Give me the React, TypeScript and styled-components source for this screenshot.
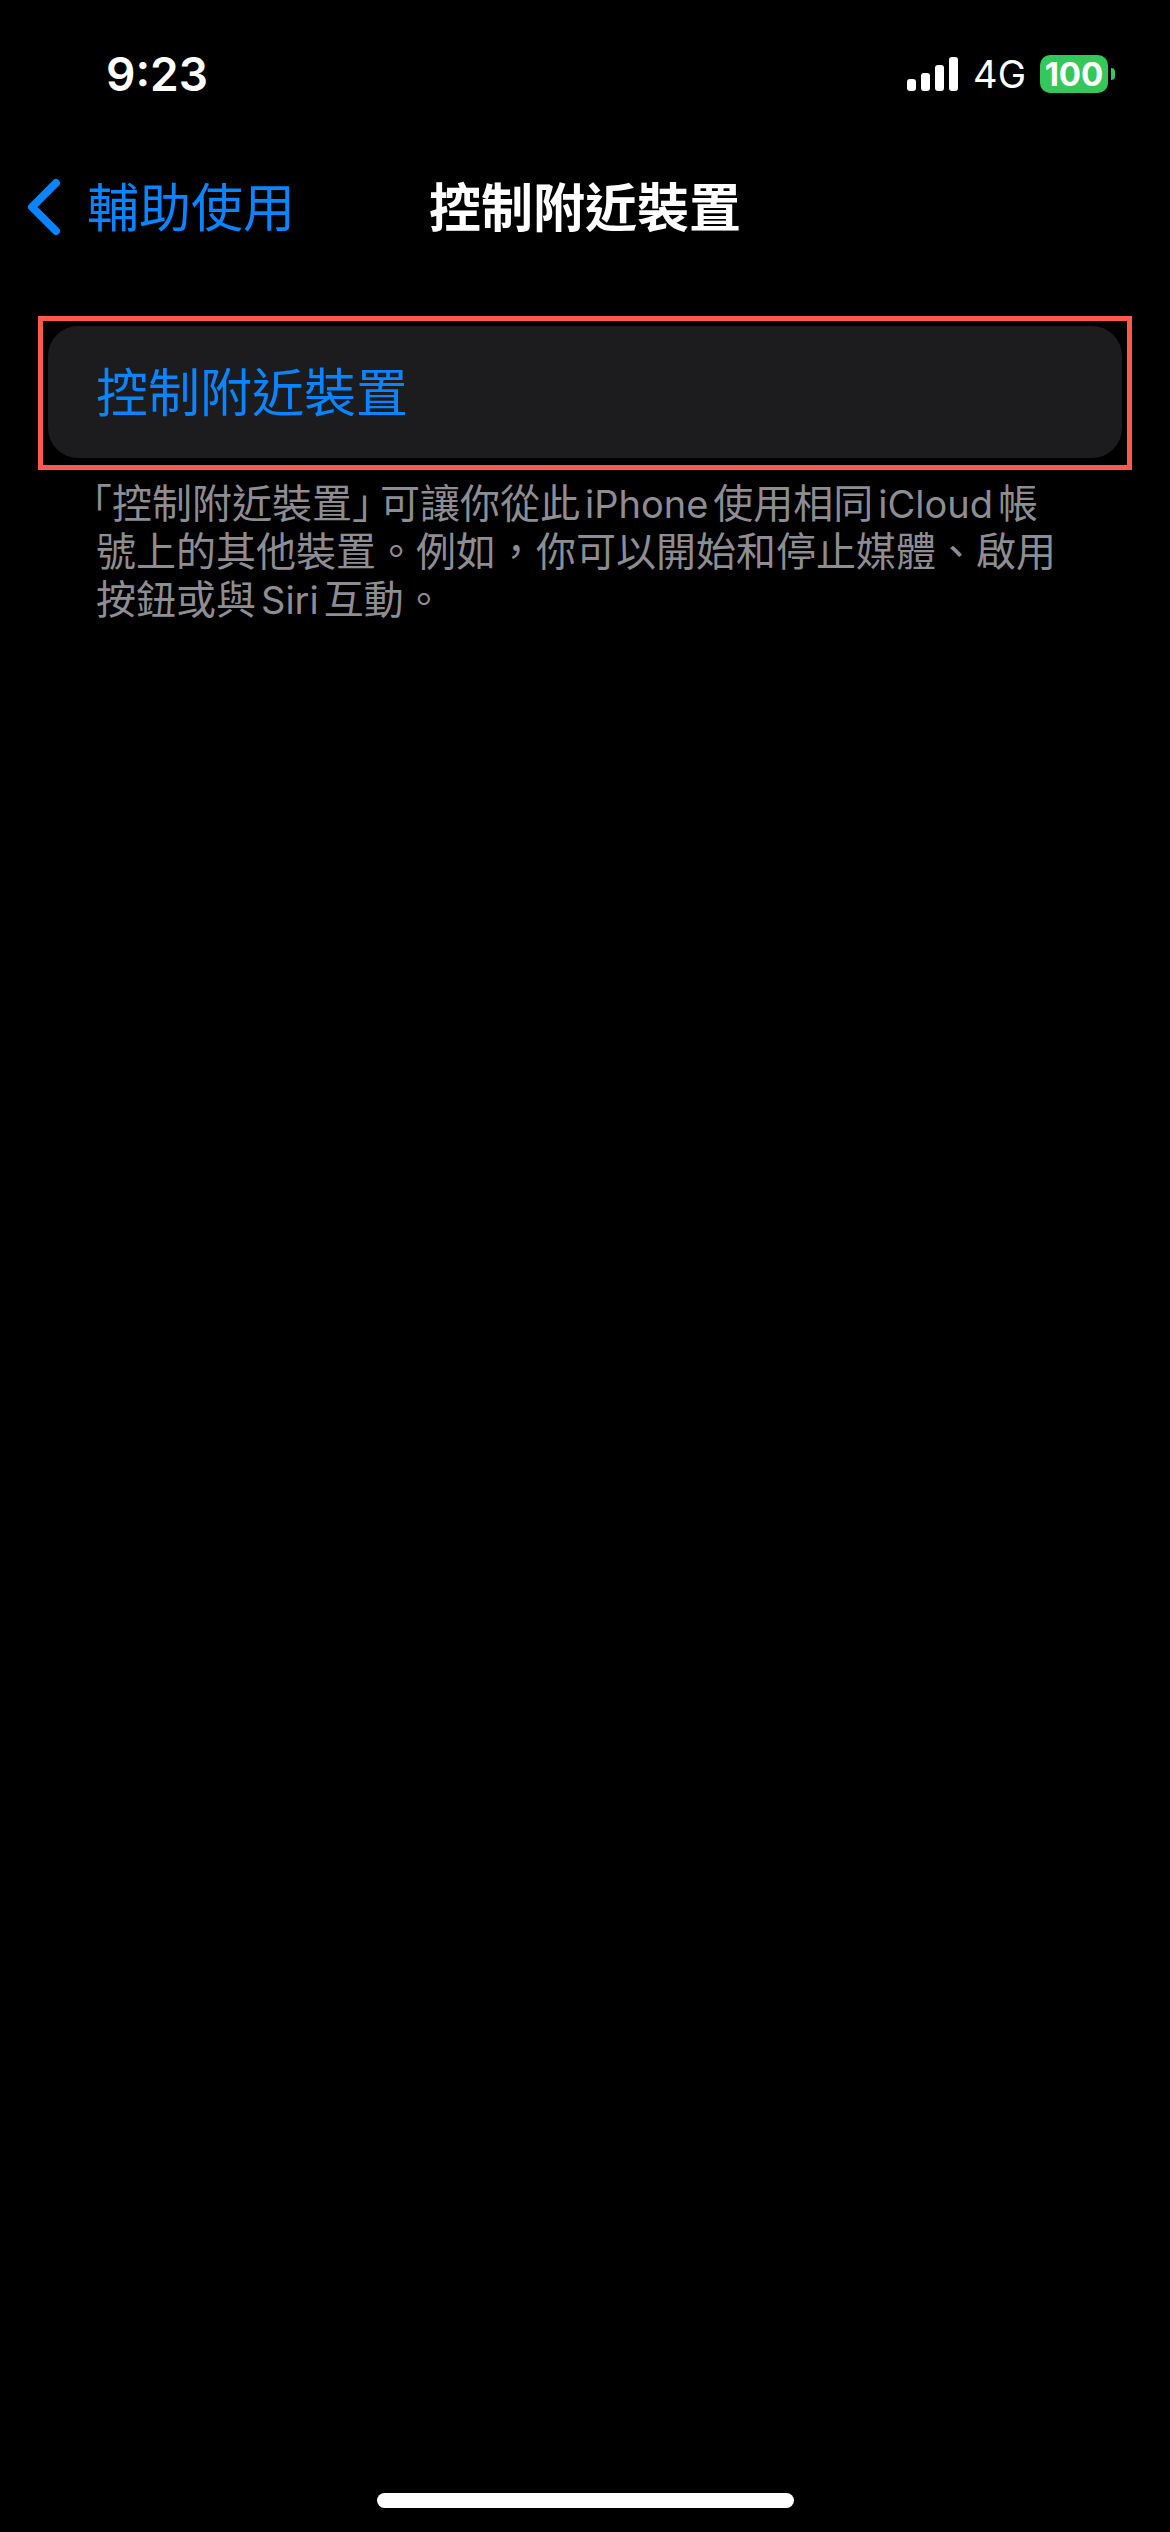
import React from "react";
import styled, { createGlobalStyle } from "styled-components";

const GlobalStyle = createGlobalStyle`
  * { box-sizing: border-box; }
  body {
    margin: 0;
    background: #000;
    font-family: Inter, "Noto Sans CJK TC", sans-serif;
  }
`;

const Screen = styled.div`
  display: flex;
  flex-direction: column;
  min-height: 100vh;
  background: #000;
  color: #fff;
`;

const StatusBar = styled.header`
  display: flex;
  align-items: center;
  justify-content: space-between;
  height: 148px;
  padding: 0 55px 0 106px;
`;

const Time = styled.time`
  font-size: 46px;
  font-weight: 600;
  line-height: 60px;
`;

const StatusIcons = styled.div`
  display: flex;
  align-items: center;
`;

const Signal = styled.svg`
  display: block;
  width: 52px;
  height: 36px;
`;

const Network = styled.span`
  margin: 0 14px;
  font-size: 38px;
  line-height: 48px;
`;

const Battery = styled.div`
  display: flex;
  align-items: center;
  gap: 3px;
`;

const BatteryLevel = styled.span`
  width: 68px;
  height: 38px;
  border-radius: 10px;
  background: #34c759;
  font-size: 33px;
  font-weight: 700;
  line-height: 38px;
  text-align: center;
`;

const BatteryTip = styled.span`
  width: 4px;
  height: 12px;
  border-radius: 0 6px 6px 0;
  background: #34c759;
`;

const NavBar = styled.nav`
  display: grid;
  grid-template-columns: 1fr auto 1fr;
  align-items: center;
  height: 118px;
  padding: 0 27px;
`;

const BackButton = styled.button`
  display: flex;
  align-items: center;
  gap: 26px;
  padding: 0;
  border: 0;
  background: none;
  color: #0a84ff;
  font-family: inherit;
  font-size: 52px;
  line-height: 60px;
  white-space: nowrap;
`;

const Chevron = styled.svg`
  display: block;
  width: 34px;
  height: 58px;
`;

const Label = styled.span`
  display: block;
  padding-top: 3px;
`;

const Title = styled.h1`
  margin: 0;
  font-size: 52px;
  font-weight: 600;
  line-height: 60px;
  white-space: nowrap;
`;

const Content = styled.main`
  flex: 1;
  padding: 50px 38px 0;
`;

const Highlight = styled.div`
  padding: 5px 5px 7px;
  border: 5px solid #ff594c;
`;

const ActionRow = styled.button`
  display: flex;
  align-items: center;
  width: 100%;
  height: 132px;
  padding: 0 48px;
  border: 0;
  border-radius: 30px;
  background: #1c1c1e;
  color: #0a84ff;
  font-family: inherit;
  font-size: 52px;
  line-height: 60px;
`;

const Note = styled.p`
  margin: 10px 58px 0;
  color: #8d8d93;
  font-size: 40px;
  line-height: 48px;
`;

const Quoted = styled.span`
  margin: 0 8px 0 -4px;
  font-feature-settings: "halt";
`;

const Latin = styled.span`
  margin: 0 5px;
  font-size: 38px;
`;

const HomeArea = styled.footer`
  display: flex;
  justify-content: center;
  padding-bottom: 24px;
`;

const HomeIndicator = styled.div`
  width: 417px;
  height: 15px;
  border-radius: 8px;
  background: #fff;
`;

const signalBars = [
  { x: 0, height: 12 },
  { x: 14, height: 18 },
  { x: 28, height: 26 },
  { x: 42, height: 34 },
];

export default function App() {
  return (
    <Screen lang="zh-Hant-TW">
      <GlobalStyle />
      <StatusBar>
        <Time>9:23</Time>
        <StatusIcons>
          <Signal viewBox="0 0 52 36" aria-hidden="true">
            {signalBars.map(({ x, height }) => (
              <rect key={x} x={x} y={35 - height} width="9" height={height} rx="3" fill="#fff" />
            ))}
          </Signal>
          <Network>4G</Network>
          <Battery>
            <BatteryLevel>100</BatteryLevel>
            <BatteryTip />
          </Battery>
        </StatusIcons>
      </StatusBar>
      <NavBar>
        <BackButton type="button">
          <Chevron viewBox="0 0 34 58" aria-hidden="true">
            <path
              d="M29 5 L5 29 L29 53"
              fill="none"
              stroke="currentColor"
              strokeWidth="8"
              strokeLinecap="round"
              strokeLinejoin="round"
            />
          </Chevron>
          <Label>輔助使用</Label>
        </BackButton>
        <Title>
          <Label>控制附近裝置</Label>
        </Title>
      </NavBar>
      <Content>
        <Highlight>
          <ActionRow type="button">
            <Label>控制附近裝置</Label>
          </ActionRow>
        </Highlight>
        <Note>
          <Quoted>「控制附近裝置」</Quoted>可讓你從此<Latin>iPhone</Latin>使用相同<Latin>iCloud</Latin>帳
          <br />
          號上的其他裝置。例如，你可以開始和停止媒體、啟用
          <br />
          按鈕或與<Latin>Siri</Latin>互動。
        </Note>
      </Content>
      <HomeArea>
        <HomeIndicator />
      </HomeArea>
    </Screen>
  );
}
